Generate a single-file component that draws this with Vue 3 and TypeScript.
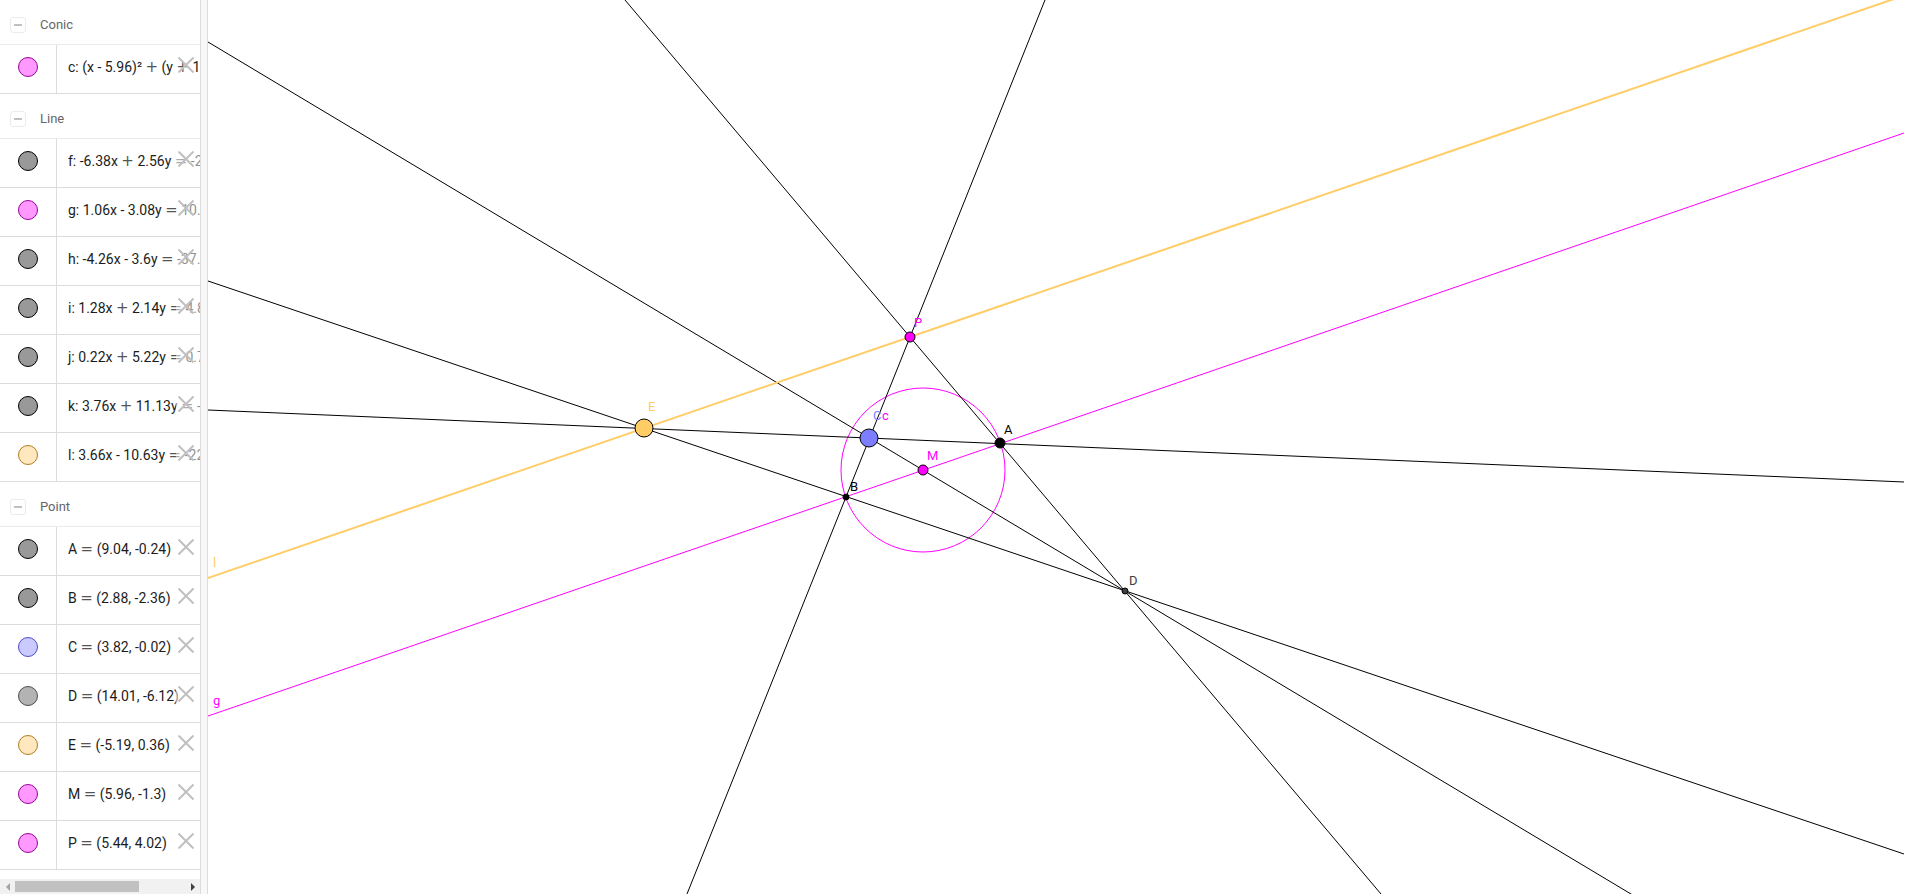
<script setup lang="ts">
interface Row { text: string; fill: string; stroke: string; veil?: boolean }
interface Group { name: string; rows: Row[] }
interface Segment { x1: number; y1: number; x2: number; y2: number; color: string; width: number }
interface Dot { x: number; y: number; r: number; fill: string }
interface Label { x: number; y: number; text: string; color: string }

const GREY = '#999999'
const PINK = '#ff99ff'
const BLACK = '#000000'
const MAGENTA = '#ff00ff'
const ORANGE = '#ffcc66'

const dark = (text: string): Row => ({ text, fill: GREY, stroke: '#000000', veil: true })
const pink = (text: string, veil = true): Row => ({ text, fill: PINK, stroke: '#990099', veil })
const gold = (text: string): Row => ({ text, fill: '#ffe8bf', stroke: '#b07d1c', veil: true })

const groups: Group[] = [
  { name: 'Conic', rows: [pink('c: (x - 5.96)² + (y + 1.3)² = 10.62', false)] },
  {
    name: 'Line',
    rows: [
      dark('f: -6.38x + 2.56y = -24.42'),
      pink('g: 1.06x - 3.08y = 10.32'),
      dark('h: -4.26x - 3.6y = -37.65'),
      dark('i: 1.28x + 2.14y = 4.85'),
      dark('j: 0.22x + 5.22y = 0.74'),
      dark('k: 3.76x + 11.13y = -15.44'),
      gold('l: 3.66x - 10.63y = -22.82'),
    ],
  },
  {
    name: 'Point',
    rows: [
      dark('A = (9.04, -0.24)'),
      dark('B = (2.88, -2.36)'),
      { text: 'C = (3.82, -0.02)', fill: '#cacaff', stroke: '#4d4dc4', veil: true },
      { text: 'D = (14.01, -6.12)', fill: '#b3b3b3', stroke: '#4d4d4d', veil: true },
      gold('E = (-5.19, 0.36)'),
      pink('M = (5.96, -1.3)'),
      pink('P = (5.44, 4.02)'),
    ],
  },
]

// The wide operators are set in their own face, so they are split from the rest.
const pieces = (text: string): string[] => text.split(/([=+])/)
const isOperator = (piece: string): boolean => piece === '=' || piece === '+'

// Lines are infinite: each is prolonged past both given points and clipped by the view.
function line(x1: number, y1: number, x2: number, y2: number, color = BLACK, width = 1): Segment {
  const dx = x2 - x1
  const dy = y2 - y1
  return { x1: x1 - dx, y1: y1 - dy, x2: x2 + dx, y2: y2 + dy, color, width }
}

const lines: Segment[] = [
  line(0, 716, 1696, 133, MAGENTA),
  line(837, 0, 479, 894),
  line(417, 0, 1173, 894),
  line(0, 42, 1423, 894),
  line(0, 281, 1696, 854),
  line(0, 410, 1696, 482),
  line(0, 578, 1683, 0, ORANGE, 2),
]

const dots: Dot[] = [
  { x: 792, y: 443, r: 5, fill: '#000000' },
  { x: 638, y: 497, r: 3, fill: '#000000' },
  { x: 661, y: 438, r: 9, fill: '#7d7dff' },
  { x: 917, y: 591, r: 3, fill: '#404040' },
  { x: 436, y: 428, r: 9, fill: ORANGE },
  { x: 715, y: 470, r: 5, fill: MAGENTA },
  { x: 702, y: 337, r: 5, fill: MAGENTA },
]

const labels: Label[] = [
  { x: 796, y: 434, text: 'A', color: BLACK },
  { x: 642, y: 491, text: 'B', color: BLACK },
  { x: 665, y: 420, text: 'C', color: '#7d7dff' },
  { x: 674, y: 420, text: 'c', color: MAGENTA },
  { x: 921, y: 585, text: 'D', color: '#404040' },
  { x: 440, y: 411, text: 'E', color: ORANGE },
  { x: 719, y: 460, text: 'M', color: MAGENTA },
  { x: 706, y: 327, text: 'P', color: MAGENTA },
  { x: 5, y: 567, text: 'l', color: ORANGE },
  { x: 5, y: 705, text: 'g', color: MAGENTA },
]
</script>

<template>
  <div class="app">
    <aside class="algebra">
      <div class="list">
        <section v-for="group in groups" :key="group.name">
          <header class="head">
            <button class="fold" type="button" :aria-label="'Collapse ' + group.name">
              <svg width="16" height="16" viewBox="0 0 16 16">
                <rect x="0.5" y="0.5" width="15" height="15" rx="2.5" fill="#fff" stroke="#ebebeb" />
                <path d="M4 8h8" stroke="#c0c0c0" stroke-width="2" />
              </svg>
            </button>
            <h2>{{ group.name }}</h2>
          </header>
          <div v-for="row in group.rows" :key="row.text" class="row">
            <button class="marble" type="button" :aria-label="'Toggle ' + row.text">
              <svg width="20" height="20" viewBox="0 0 20 20">
                <circle cx="10" cy="10" r="9.5" :fill="row.fill" :stroke="row.stroke" />
              </svg>
            </button>
            <span class="value"><span v-for="(p, i) in pieces(row.text)" :key="i" :class="{ op: isOperator(p) }">{{ p }}</span></span>
            <button class="remove" :class="{ veil: row.veil }" type="button" :aria-label="'Delete ' + row.text">
              <svg width="16" height="16" viewBox="0 0 16 16">
                <path d="M0.5 0.5l15 15M15.5 0.5l-15 15" stroke="#c0c0c0" stroke-width="2" />
              </svg>
            </button>
          </div>
        </section>
      </div>
      <div class="scroll">
        <button type="button" aria-label="Scroll left">
          <svg width="4" height="8" viewBox="0 0 4 8"><path d="M4 0v8L0 4z" fill="#a3a3a3" /></svg>
        </button>
        <div class="track"><div class="thumb"></div></div>
        <button type="button" aria-label="Scroll right">
          <svg width="4" height="8" viewBox="0 0 4 8"><path d="M0 0v8l4-4z" fill="#404040" /></svg>
        </button>
      </div>
    </aside>
    <div class="splitter"></div>
    <main class="graphics">
      <svg class="view" role="img" aria-label="Graphics view">
        <circle cx="715" cy="470" r="82" fill="none" stroke="#ff00ff" />
        <line
          v-for="(l, i) in lines"
          :key="i"
          :x1="l.x1"
          :y1="l.y1"
          :x2="l.x2"
          :y2="l.y2"
          :stroke="l.color"
          :stroke-width="l.width"
        />
        <circle v-for="(d, i) in dots" :key="i" :cx="d.x" :cy="d.y" :r="d.r" :fill="d.fill" stroke="#000" />
        <text v-for="t in labels" :key="t.text" :x="t.x" :y="t.y" :fill="t.color">{{ t.text }}</text>
      </svg>
    </main>
  </div>
</template>

<style>
body {
  margin: 0;
  background: #fff;
}
</style>

<style scoped>
.app {
  display: flex;
  height: 100vh;
  padding: 0 2px 2px 0;
  box-sizing: border-box;
  overflow: hidden;
  font-family: Roboto, "Liberation Sans", sans-serif;
}
button {
  display: flex;
  align-items: center;
  justify-content: center;
  padding: 0;
  border: 0;
  background: none;
  flex: none;
}
.algebra {
  display: flex;
  flex-direction: column;
  width: 200px;
  flex: none;
}
.list {
  flex: 1;
  min-height: 0;
  overflow: hidden;
}
.head {
  display: flex;
  align-items: center;
  gap: 14px;
  height: 45px;
  padding: 5px 0 0 10px;
  box-sizing: border-box;
  border-bottom: 1px solid #ebebeb;
}
h2 {
  margin: 0;
  font-size: 13px;
  font-weight: 400;
  color: #666;
}
.row {
  position: relative;
  display: flex;
  height: 49px;
  box-sizing: border-box;
  border-bottom: 1px solid #dcdcdc;
  overflow: hidden;
}
.marble {
  width: 57px;
  padding-bottom: 4px;
  border-right: 1px solid #dcdcdc;
}
.value {
  padding-left: 11px;
  font-size: 14px;
  line-height: 45px;
  white-space: pre;
  color: #1c1c1c;
}
.op {
  font-family: "DejaVu Sans", sans-serif;
  font-size: 15px;
  line-height: 1;
  color: #555;
}
.remove {
  position: absolute;
  top: 0;
  right: 0;
  width: 24px;
  height: 40px;
  padding-right: 4px;
}
.veil {
  background: rgba(255, 255, 255, 0.5);
}
.scroll {
  display: flex;
  height: 15px;
  background: #f1f1f1;
}
.scroll button {
  width: 15px;
}
.track {
  flex: 1;
  padding: 2px 0;
}
.thumb {
  width: 73%;
  height: 11px;
  background: #c1c1c1;
}
.splitter {
  flex: none;
  width: 6px;
  background: #f8f8f8;
  border: solid #dcdcdc;
  border-width: 0 1px;
}
.graphics {
  flex: 1;
  min-width: 0;
}
.view {
  display: block;
  width: 100%;
  height: 100%;
  font-size: 13px;
}
</style>
